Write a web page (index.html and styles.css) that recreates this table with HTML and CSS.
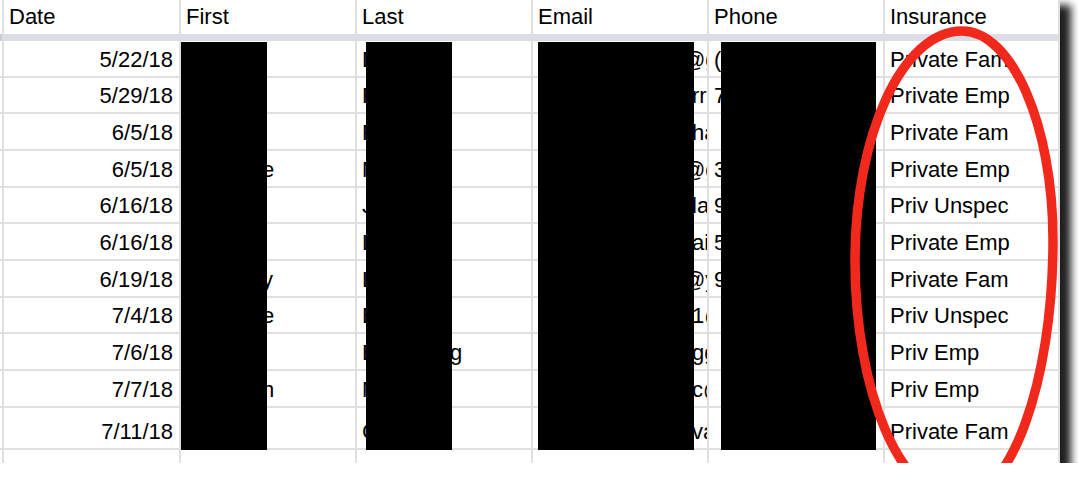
FILE: index.html
```html
<!DOCTYPE html>
<html lang="en">
<head>
<meta charset="utf-8">
<title>Sheet</title>
<link rel="stylesheet" href="styles.css">
</head>
<body>
<div class="sheet">
  <div class="row head">
    <div class="cell">Date</div>
    <div class="cell">First</div>
    <div class="cell">Last</div>
    <div class="cell">Email</div>
    <div class="cell">Phone</div>
    <div class="cell">Insurance</div>
  </div>
  <div class="band"></div>

  <div class="row">
    <div class="cell date">5/22/18</div>
    <div class="cell first"><span class="lead"></span></div>
    <div class="cell last"><span class="lead">D</span></div>
    <div class="cell email"><span class="lead early"></span><span class="tail">@gm</span></div>
    <div class="cell phone">(</div>
    <div class="cell">Private Fam</div>
  </div>
  <div class="row">
    <div class="cell date">5/29/18</div>
    <div class="cell first"><span class="lead"></span></div>
    <div class="cell last"><span class="lead">F</span></div>
    <div class="cell email"><span class="lead"></span><span class="tail">rri</span></div>
    <div class="cell phone">7</div>
    <div class="cell">Private Emp</div>
  </div>
  <div class="row">
    <div class="cell date">6/5/18</div>
    <div class="cell first"><span class="lead"></span></div>
    <div class="cell last"><span class="lead">F</span></div>
    <div class="cell email"><span class="lead"></span><span class="tail">ha</span></div>
    <div class="cell phone"></div>
    <div class="cell">Private Fam</div>
  </div>
  <div class="row">
    <div class="cell date">6/5/18</div>
    <div class="cell first"><span class="lead"></span><span class="tail">e</span></div>
    <div class="cell last"><span class="lead">M</span></div>
    <div class="cell email"><span class="lead early"></span><span class="tail">@g</span></div>
    <div class="cell phone">3</div>
    <div class="cell">Private Emp</div>
  </div>
  <div class="row">
    <div class="cell date">6/16/18</div>
    <div class="cell first"><span class="lead"></span></div>
    <div class="cell last"><span class="lead">J</span></div>
    <div class="cell email"><span class="lead"></span><span class="tail">la</span></div>
    <div class="cell phone">9</div>
    <div class="cell">Priv Unspec</div>
  </div>
  <div class="row">
    <div class="cell date">6/16/18</div>
    <div class="cell first"><span class="lead"></span></div>
    <div class="cell last"><span class="lead">L</span></div>
    <div class="cell email"><span class="lead"></span><span class="tail">ai</span></div>
    <div class="cell phone">5</div>
    <div class="cell">Private Emp</div>
  </div>
  <div class="row">
    <div class="cell date">6/19/18</div>
    <div class="cell first"><span class="lead"></span><span class="tail">y</span></div>
    <div class="cell last"><span class="lead">L</span></div>
    <div class="cell email"><span class="lead early"></span><span class="tail">@y</span></div>
    <div class="cell phone">9</div>
    <div class="cell">Private Fam</div>
  </div>
  <div class="row">
    <div class="cell date">7/4/18</div>
    <div class="cell first"><span class="lead"></span><span class="tail">e</span></div>
    <div class="cell last"><span class="lead">E</span></div>
    <div class="cell email"><span class="lead"></span><span class="tail">1@</span></div>
    <div class="cell phone"></div>
    <div class="cell">Priv Unspec</div>
  </div>
  <div class="row">
    <div class="cell date">7/6/18</div>
    <div class="cell first"><span class="lead"></span></div>
    <div class="cell last"><span class="lead">B</span><span class="tail">g</span></div>
    <div class="cell email"><span class="lead"></span><span class="tail">gg</span></div>
    <div class="cell phone"></div>
    <div class="cell">Priv Emp</div>
  </div>
  <div class="row">
    <div class="cell date">7/7/18</div>
    <div class="cell first"><span class="lead"></span><span class="tail">h</span></div>
    <div class="cell last"><span class="lead">M</span></div>
    <div class="cell email"><span class="lead"></span><span class="tail">c@</span></div>
    <div class="cell phone"></div>
    <div class="cell">Priv Emp</div>
  </div>
  <div class="row tall">
    <div class="cell date">7/11/18</div>
    <div class="cell first"><span class="lead"></span></div>
    <div class="cell last"><span class="lead">C</span></div>
    <div class="cell email"><span class="lead"></span><span class="tail">va</span></div>
    <div class="cell phone"></div>
    <div class="cell">Private Fam</div>
  </div>
  <div class="row stub">
    <div class="cell"></div>
    <div class="cell"></div>
    <div class="cell"></div>
    <div class="cell"></div>
    <div class="cell"></div>
    <div class="cell"></div>
  </div>

  <div class="redact r-first"></div>
  <div class="redact r-last"></div>
  <div class="redact r-email"></div>
  <div class="redact r-phone"></div>

  <svg class="ring" width="1060" height="463" viewBox="0 0 1060 463" aria-hidden="true">
    <path d="M962 31 C1012 31 1053 125 1053 240 C1053 384 1010 500 958 500 C901 500 855 392 855 260 C855 134 903 31 962 31 Z" fill="none" stroke="#f1291c" stroke-width="9.5"/>
  </svg>
</div>
</body>
</html>
```

FILE: styles.css
```css
* {
  box-sizing: border-box;
}

body {
  margin: 0;
  background: #ffffff;
  font-family: "Liberation Sans", Arial, sans-serif;
  color: #000000;
}

.sheet {
  position: relative;
  width: 1060px;
  height: 463px;
  background: #ffffff;
  display: flex;
  flex-direction: column;
  box-shadow: 8px 8px 8px 3px rgba(0, 0, 0, 0.88);
}

.row {
  display: grid;
  grid-template-columns: 177px 176px 176px 176px 176px 177px;
  width: 1060px;
  height: 36.67px;
  padding-left: 2px;
  border-bottom: 2px solid #e0e0e0;
  flex: none;
}

.row .cell {
  padding-bottom: 4px;
}

.row.head {
  height: 34px;
  border-bottom: none;
}

.row.head .cell {
  padding-bottom: 5px;
}

.row.tall {
  height: 42px;
}

.row.stub {
  flex: 1;
  height: auto;
  border-bottom: none;
}

.band {
  flex: none;
  height: 7px;
  width: 1060px;
  background: #dadde5;
  border-left: 2px solid #c9cbd1;
}

.cell {
  display: flex;
  align-items: flex-end;
  min-width: 0;
  padding: 0 6px 4px 5px;
  border-left: 2px solid #e0e0e0;
  font-size: 22px;
  line-height: 25px;
  white-space: nowrap;
  overflow: hidden;
}

.cell:last-child {
  border-right: 2px solid #e0e0e0;
}

.cell.date {
  justify-content: flex-end;
}

.lead {
  flex: none;
  overflow: hidden;
}

.tail {
  flex: none;
}

.first .lead {
  width: 76px;
}

.last .lead {
  width: 88px;
}

.email .lead {
  width: 154px;
}

.email .lead.early {
  width: 145px;
}

.redact {
  position: absolute;
  top: 42px;
  height: 408px;
  background: #000000;
}

.r-first {
  left: 181px;
  width: 86px;
}

.r-last {
  left: 366px;
  width: 86px;
}

.r-email {
  left: 538px;
  width: 156px;
}

.r-phone {
  left: 721px;
  width: 155px;
}

.ring {
  position: absolute;
  top: 0;
  left: 0;
  pointer-events: none;
}
```
